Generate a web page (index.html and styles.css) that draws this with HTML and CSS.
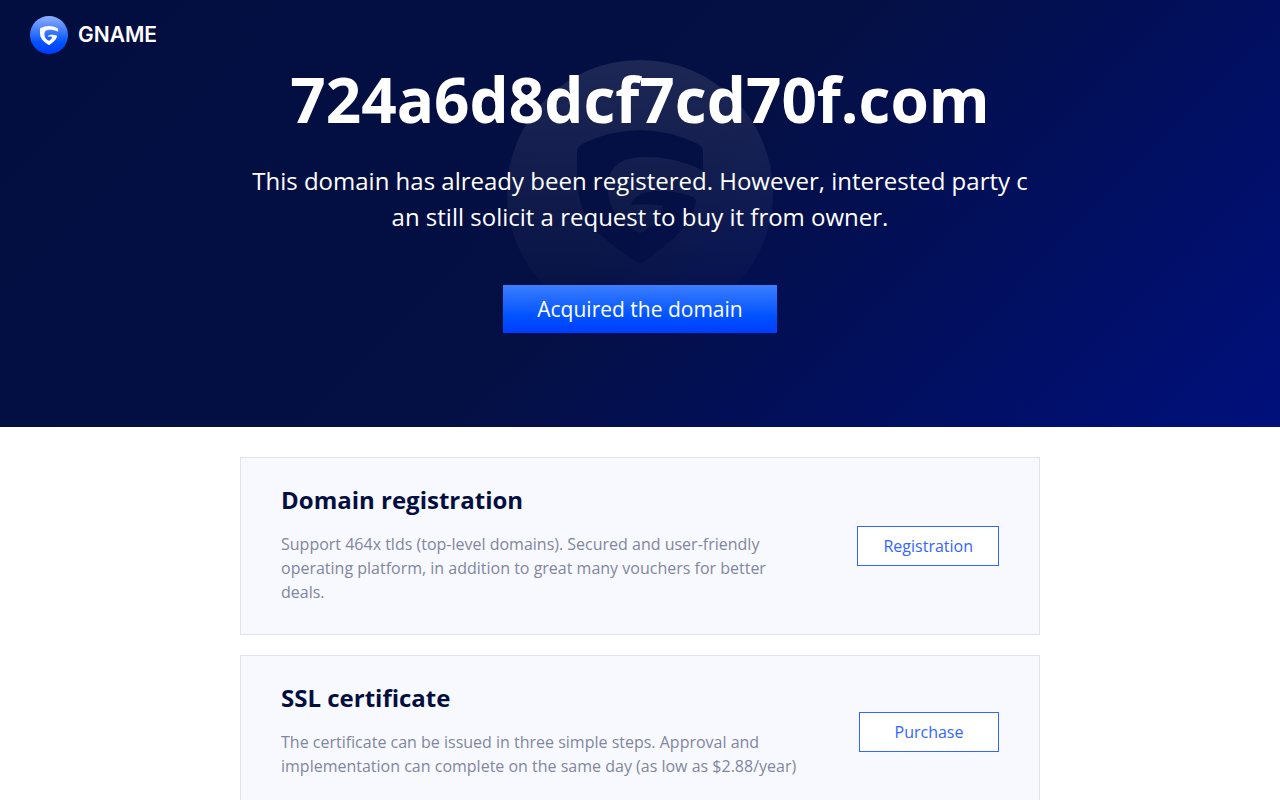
FILE: index.html
```html
<!DOCTYPE html>
<html lang="en">
<head>
  <meta charset="UTF-8">
  <meta name="viewport" content="width=device-width, initial-scale=1.0">
  <title>724a6d8dcf7cd70f.com</title>
  <link rel="stylesheet" href="styles.css">
</head>
<body>

<div class="banner">
  <a class="logo" href="#">
    <svg class="logo-icon" viewBox="0 0 266 266" aria-hidden="true">
      <defs>
        <linearGradient id="logoFill" x1="0" y1="0" x2="0" y2="1">
          <stop offset="0" stop-color="#8fb0ff"/>
          <stop offset="0.7" stop-color="#0052ff"/>
          <stop offset="1" stop-color="#003cff"/>
        </linearGradient>
      </defs>
      <circle cx="133" cy="133" r="133" fill="url(#logoFill)"/>
      <path fill="#fff" d="M70 92Q70 87 75 84Q133 56 191 84Q196 87 196 92V111C178 101 158 97 138 97C112 97 101 108 101 127C101 150 113 164 133 173C145 168 153 159 156 146Q140 143 124 145C127 134 142 130 158 131Q175 132 186 137Q190 139 189 143C184 165 165 182 138 201Q133 205 128 201C86 174 70 154 70 116Z"/>
    </svg>
    <span>GNAME</span>
  </a>
  <svg class="watermark" viewBox="0 0 266 266" aria-hidden="true">
    <defs>
      <linearGradient id="markFill" x1="0" y1="0" x2="0" y2="1">
        <stop offset="0" stop-color="#fff" stop-opacity="0.1"/>
        <stop offset="0.9" stop-color="#fff" stop-opacity="0.01"/>
        <stop offset="1" stop-color="#fff" stop-opacity="0"/>
      </linearGradient>
    </defs>
    <path fill="url(#markFill)" fill-rule="evenodd" d="M133 0A133 133 0 0 1 133 266A133 133 0 0 1 133 0ZM70 92Q70 87 75 84Q133 56 191 84Q196 87 196 92V111C178 101 158 97 138 97C112 97 101 108 101 127C101 150 113 164 133 173C145 168 153 159 156 146Q140 143 124 145C127 134 142 130 158 131Q175 132 186 137Q190 139 189 143C184 165 165 182 138 201Q133 205 128 201C86 174 70 154 70 116Z"/>
  </svg>
  <div class="banner-content">
    <h1>724a6d8dcf7cd70f.com</h1>
    <p>This domain has already been registered. However, interested party can still solicit a request to buy it from owner.</p>
    <a class="buy" href="#">Acquired the domain</a>
  </div>
</div>

<div class="services">
  <div class="card">
    <div class="card-text">
      <h2>Domain registration</h2>
      <p>Support 464x tlds (top-level domains). Secured and user-friendly operating platform, in addition to great many vouchers for better deals.</p>
    </div>
    <a class="card-link" href="#">Registration</a>
  </div>
  <div class="card">
    <div class="card-text">
      <h2>SSL certificate</h2>
      <p>The certificate can be issued in three simple steps. Approval and implementation can complete on the same day (as low as $2.88/year)</p>
    </div>
    <a class="card-link" href="#">Purchase</a>
  </div>
</div>

</body>
</html>
```

FILE: styles.css
```css
* {
  box-sizing: border-box;
  margin: 0;
  padding: 0;
}
body {
  font-family: "Segoe UI", "Open Sans", sans-serif;
  background: #fff;
}
a {
  text-decoration: none;
}
.banner {
  position: relative;
  padding: 58px 20px 94px;
  background: linear-gradient(135deg, #020e40 0%, #041043 50%, #020f5c 72%, #00107c 100%);
}
.logo {
  position: absolute;
  top: 16px;
  left: 30px;
  display: flex;
  align-items: center;
  gap: 10px;
  color: #fff;
  font: 600 21px/38px Inter, sans-serif;
}
.logo-icon {
  width: 38px;
  height: 38px;
}
/* faded logo behind the domain name */
.watermark {
  position: absolute;
  top: 60px;
  left: 50%;
  width: 266px;
  margin-left: -133px;
}
.banner-content {
  position: relative;
  max-width: 800px;
  margin: 0 auto;
  text-align: center;
  color: #fff;
}
.banner-content h1 {
  font-size: 62px;
  line-height: 82px;
}
.banner-content p {
  margin: 23px 0 50px;
  padding: 0 8px;
  font-size: 24px;
  line-height: 36px;
  word-break: break-all;
}
.buy {
  display: inline-block;
  vertical-align: top;
  padding: 0 34px;
  font-size: 21px;
  line-height: 48px;
  color: #fff;
  background: linear-gradient(#3d7eff, #0052ff 66%, #003cff);
}
.services {
  max-width: 800px;
  margin: 30px auto;
}
.card {
  display: flex;
  align-items: center;
  justify-content: space-between;
  margin-bottom: 20px;
  padding: 30px 40px;
  background: #f8f9ff;
  border: 1px solid #e0e4f0;
}
.card-text {
  max-width: 530px;
}
.card h2 {
  font-size: 24px;
  line-height: 24px;
  color: #020e40;
}
.card p {
  margin-top: 20px;
  font-size: 16px;
  line-height: 24px;
  color: #80869e;
}
.card-link {
  min-width: 140px;
  padding: 0 25px;
  text-align: center;
  font-size: 16px;
  line-height: 38px;
  color: #3366ff;
  background: #fff;
  border: 1px solid #3366ff;
}
```
